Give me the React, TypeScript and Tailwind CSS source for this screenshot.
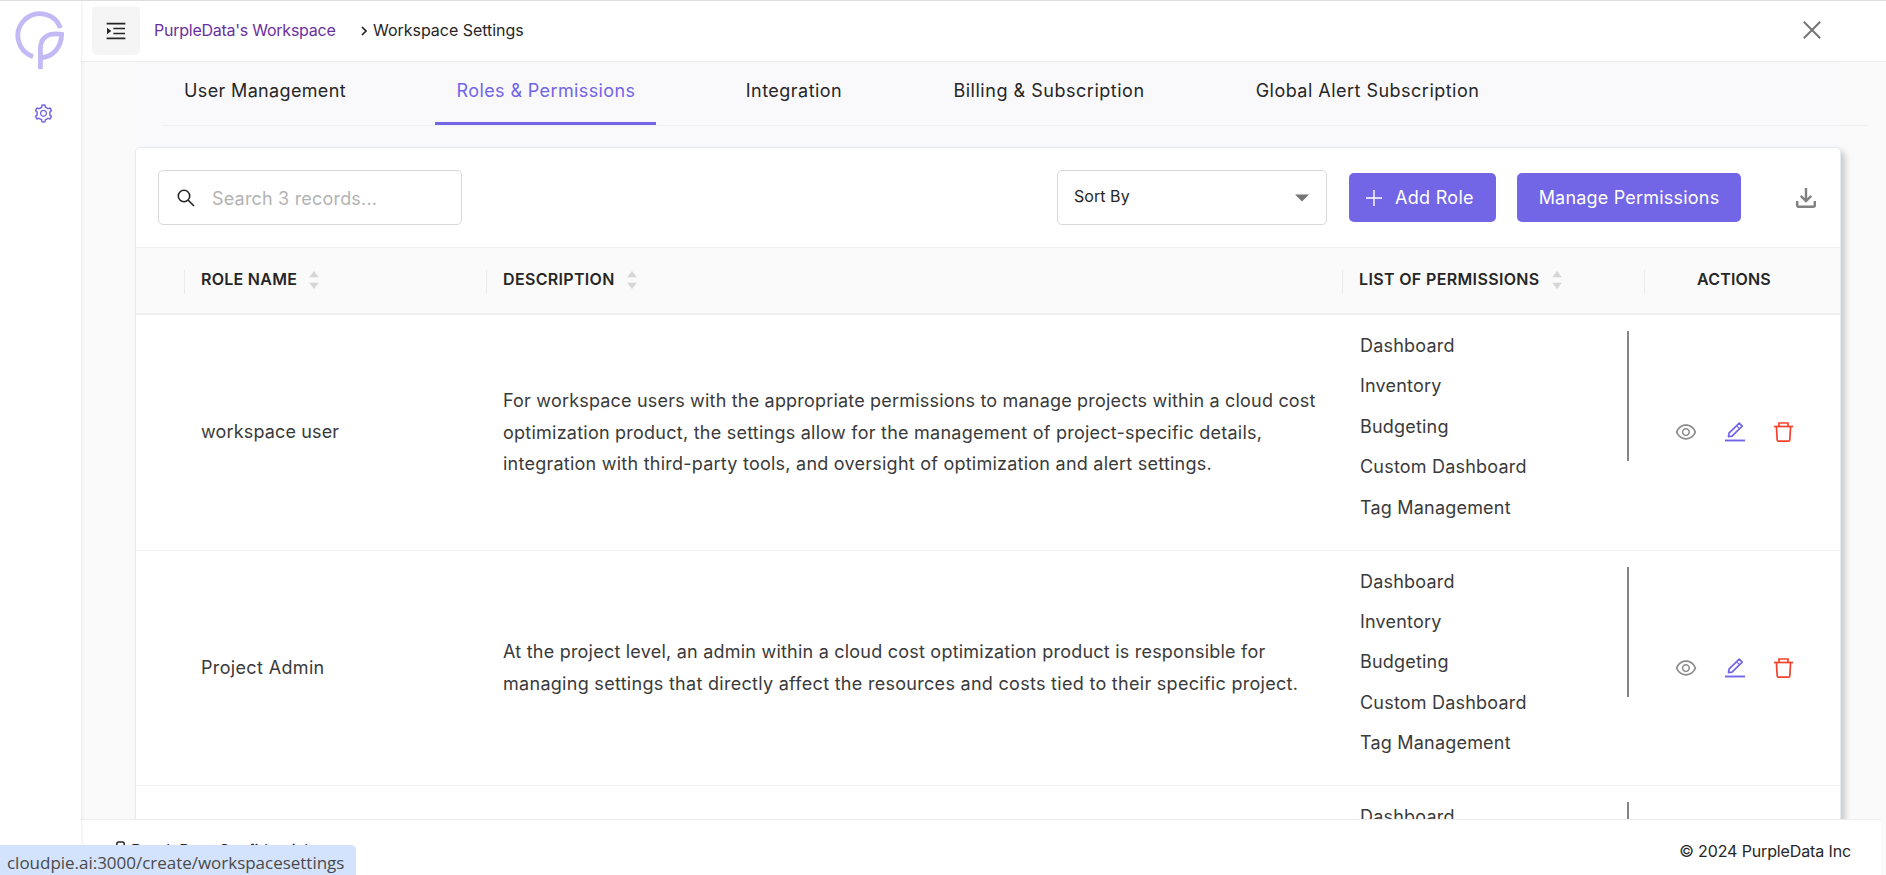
import React from "react";
import { AiOutlineMenuUnfold, AiOutlineSetting, AiOutlineEye } from "react-icons/ai";

const tabs = [
  { label: "User Management", cls: "w-[206px] tracking-[0.34px]" },
  { label: "Roles & Permissions", cls: "w-[221px] pl-px tracking-[0.38px]" },
  { label: "Integration", cls: "w-[141px] pl-px tracking-[0.47px]" },
  { label: "Billing & Subscription", cls: "w-[235px] pl-px tracking-[0.52px]" },
  { label: "Global Alert Subscription", cls: "w-[267px] pl-[2px] tracking-[0.48px]" },
];

const permissions = ["Dashboard", "Inventory", "Budgeting", "Custom Dashboard", "Tag Management"];

const roles = [
  {
    name: "workspace user",
    nameCls: "tracking-[0.15px]",
    lines: [
      { text: "For workspace users with the appropriate permissions to manage projects within a cloud cost", cls: "tracking-[0.19px]" },
      { text: "optimization product, the settings allow for the management of project-specific details,", cls: "tracking-[0.24px]" },
      { text: "integration with third-party tools, and oversight of optimization and alert settings.", cls: "tracking-[0.24px]" },
    ],
  },
  {
    name: "Project Admin",
    nameCls: "tracking-[0.35px]",
    lines: [
      { text: "At the project level, an admin within a cloud cost optimization product is responsible for", cls: "tracking-[0.22px]" },
      { text: "managing settings that directly affect the resources and costs tied to their specific project.", cls: "tracking-[0.29px]" },
    ],
  },
  { name: "", nameCls: "", lines: [] },
];

function Logo() {
  return (
    <svg width="50" height="58" viewBox="0 0 50 58" fill="none" stroke="#c2b9f5" strokeWidth="4.8">
      <path d="M45.5 17A22 22 0 1 0 18 45.6" />
      <path d="M25.4 58V38C25.4 27 32 21.5 46.6 23.3C46.5 36 38 46.5 25.4 46.8" />
    </svg>
  );
}

function Sorter() {
  return (
    <svg width="10" height="18" viewBox="0 0 10 18" fill="#d6d6d6" className="mb-px">
      <path d="M5 0L9.8 6.2H0.2Z" />
      <path d="M5 18L9.8 11.8H0.2Z" />
    </svg>
  );
}

function SearchIcon() {
  return (
    <svg width="18" height="18" viewBox="0 0 18 18" fill="none" stroke="#262626" strokeWidth="1.6">
      <circle cx="7" cy="7" r="5.7" />
      <path d="M11 11L17 17" />
    </svg>
  );
}

function PlusIcon() {
  return (
    <svg width="16" height="16" viewBox="0 0 16 16" stroke="#ffffff" strokeWidth="1.4">
      <path d="M8 0V16M0 8H16" />
    </svg>
  );
}

function CloseIcon() {
  return (
    <svg width="18" height="18" viewBox="0 0 18 18" stroke="#757575" strokeWidth="2">
      <path d="M0.8 0.8L17.2 17.2M17.2 0.8L0.8 17.2" />
    </svg>
  );
}

function EditIcon() {
  return (
    <svg width="20" height="20" viewBox="0 0 20 20" fill="none" stroke="#7265e6" strokeWidth="1.7">
      <path d="M14.2 1.2L17.2 4.2L7 14.2L3.5 14.6L4 11.2Z" strokeLinejoin="round" />
      <path d="M11.6 3.8L14.5 6.7" strokeWidth="1.2" />
      <path d="M0 18.5H20" strokeWidth="1.9" />
    </svg>
  );
}

function TrashIcon() {
  return (
    <svg width="19" height="20" viewBox="0 0 19 20" fill="none" stroke="#f5412d" strokeWidth="1.7">
      <path d="M0 4.5H19" />
      <path d="M5 4.5V1H14V4.5" />
      <path d="M2.4 4.5L3.2 18Q3.3 19.1 4.3 19.1H14.7Q15.7 19.1 15.8 18L16.6 4.5" />
    </svg>
  );
}

function DownloadIcon() {
  return (
    <svg width="20" height="20" viewBox="0 0 20 20" fill="none" stroke="#808080" strokeWidth="2.4">
      <path d="M10 0V13M4.8 7.8L10 13L15.2 7.8" />
      <path d="M1.2 13V17.3Q1.2 18.8 2.7 18.8H17.3Q18.8 18.8 18.8 17.3V13" />
    </svg>
  );
}

function HeadCell({ label, className }: { label: string; className: string }) {
  return (
    <div className={`${className} flex shrink-0 items-center gap-3 pl-4`}>
      <span className="mb-[3px]">{label}</span>
      <Sorter />
    </div>
  );
}

function Divider() {
  return <div className="mt-[2px] h-6 w-px shrink-0 bg-[#ebebeb]" />;
}

export default function App() {
  return (
    <div className="relative flex h-[875px] w-[1886px] overflow-hidden border-t border-[#dedede] bg-[#fafafa] font-['Inter',sans-serif] text-[#262626]">
      <aside className="z-10 flex w-[81px] shrink-0 flex-col bg-white shadow-[0_0_4px_rgba(0,0,0,0.1)]">
        <div className="pl-[15px] pt-[10px]">
          <Logo />
        </div>
        <AiOutlineSetting className="ml-[33px] mt-[34px] size-[21px] text-[#7265e6]" />
      </aside>

      <div className="flex min-w-0 flex-1 flex-col">
        <header className="flex h-[61px] shrink-0 items-center border-b border-[#ededed] bg-white pb-[2px] pl-[11px] text-[16px]">
          <button className="flex h-[49px] w-12 items-center justify-center rounded-[5px] bg-[#f5f5f5]">
            <AiOutlineMenuUnfold className="mr-px mt-px size-6" />
          </button>
          <a className="ml-[14px] w-[181px] whitespace-nowrap pb-px tracking-[-0.25px] text-[#6b2fa0]">PurpleData's Workspace</a>
          <svg className="ml-[26px] mt-px" width="6" height="10" viewBox="0 0 6 10" fill="none" stroke="#262626" strokeWidth="1.7">
            <path d="M1 1L5 5L1 9" />
          </svg>
          <span className="ml-[6px] flex-1 whitespace-nowrap pb-px tracking-[-0.03px]">Workspace Settings</span>
          <div className="mr-[65px]">
            <CloseIcon />
          </div>
        </header>

        <div className="flex min-h-0 flex-1 flex-col overflow-hidden">
          <div className="ml-[54px] flex h-[85px] w-[1706px] shrink-0 bg-[#f9f9fc] pl-[27px]">
            <nav className="flex h-16 w-[1706px] shrink-0 gap-[67px] border-b border-[#f0f0f0] text-[18px]">
              {tabs.map((t, i) => (
                <div
                  key={t.label}
                  className={`flex h-[63px] shrink-0 justify-center whitespace-nowrap pt-[15px] ${t.cls} ${
                    i === 1 ? "border-b-[3px] border-[#7265e6] text-[#7265e6]" : ""
                  }`}
                >
                  {t.label}
                </div>
              ))}
            </nav>
          </div>

          <main className="ml-[54px] w-[1706px] shrink-0 rounded-[5px] border border-[#e6ebf1] bg-white shadow-[4px_4px_6px_rgba(0,0,0,0.2)]">
            <div className="flex h-[99px] items-center px-[22px]">
              <div className="flex h-[55px] w-[304px] items-center rounded-[5px] border border-[#d9d9d9] pl-[18px]">
                <SearchIcon />
                <span className="ml-[17px] mt-px text-[18px] tracking-[0.19px] text-[#b3b3b3]">Search 3 records...</span>
              </div>
              <div className="ml-auto flex h-[55px] w-[270px] items-center justify-between rounded-[5px] border border-[#d9d9d9] pl-4 pr-[17px] text-[16px]">
                <span className="mb-[3px] tracking-[0.05px]">Sort By</span>
                <svg width="14" height="8" viewBox="0 0 14 8" fill="#757575">
                  <path d="M0 0.5H14L7 7.5Z" />
                </svg>
              </div>
              <button className="ml-[22px] flex h-[49px] w-[147px] items-center rounded-[5px] bg-[#7265e6] pl-[17px] text-[18px] text-white">
                <PlusIcon />
                <span className="ml-[13px] whitespace-nowrap tracking-[0.3px]">Add Role</span>
              </button>
              <button className="ml-[21px] h-[49px] w-[224px] whitespace-nowrap rounded-[5px] bg-[#7265e6] text-[18px] tracking-[0.2px] text-white">
                Manage Permissions
              </button>
              <div className="ml-[55px] mr-[2px]">
                <DownloadIcon />
              </div>
            </div>

            <div className="flex h-[68px] items-center border-b-2 border-t border-[#f0f0f0] bg-[#fafafa] pl-[48px] text-[16px] font-semibold">
              <Divider />
              <HeadCell label="ROLE NAME" className="w-[301px] tracking-[0.27px]" />
              <Divider />
              <HeadCell label="DESCRIPTION" className="w-[855px] tracking-[0.33px]" />
              <Divider />
              <HeadCell label="LIST OF PERMISSIONS" className="w-[301px] tracking-[0.35px]" />
              <Divider />
              <div className="mb-[3px] flex-1 pr-[17px] text-center tracking-[0.17px]">ACTIONS</div>
            </div>

            {roles.map((r, i) => (
              <div key={i} className="flex h-[235.6px] items-center border-b border-[#f0f0f0] pl-[65px] text-[18px] tracking-[0.2px] text-[#3a3a3a]">
                <div className={`mb-px w-[302px] shrink-0 ${r.nameCls}`}>{r.name}</div>
                <div className="w-[857px] shrink-0 leading-[31.4px]">
                  {r.lines.map((l) => (
                    <div key={l.text} className={`whitespace-nowrap ${l.cls}`}>
                      {l.text}
                    </div>
                  ))}
                </div>
                <div className="flex h-full w-[269px] shrink-0 justify-between pt-4">
                  <ul className="pt-px leading-[28.4px]">
                    {permissions.map((p) => (
                      <li key={p} className="mb-3">{p}</li>
                    ))}
                  </ul>
                  <div className="h-[130px] w-[2px] bg-[#858585]" />
                </div>
                <div className="flex items-center pl-[45px]">
                  <AiOutlineEye className="size-6 text-[#8c8c8c]" />
                  <div className="ml-[27px]">
                    <EditIcon />
                  </div>
                  <div className="ml-[29px]">
                    <TrashIcon />
                  </div>
                </div>
              </div>
            ))}
          </main>
        </div>

        <footer className="mr-[5px] flex h-[56px] shrink-0 items-center justify-between border-t border-[#ededed] bg-white pl-[34px] pr-[30px] pt-[6px] text-[16px]">
          <span className="mb-px flex items-center gap-[5px] tracking-[-0.1px]">
            <svg className="mb-[2px]" width="11" height="16" viewBox="0 0 11 16" fill="none" stroke="#262626" strokeWidth="1.5">
              <path d="M1.8 7V3Q1.8 1 3.8 1H7.2Q9.2 1 9.2 3V7M1 7H10V15H1Z" />
            </svg>
            PurpleData Confidential
          </span>
          <span className="tracking-[-0.13px]">© 2024 PurpleData Inc</span>
        </footer>
      </div>

      <div className="absolute bottom-0 left-0 z-20 h-[30px] w-[356px] whitespace-nowrap rounded-tr-[5px] bg-[#d3e3fd] pl-[7px] pt-[5px] font-['Open_Sans',sans-serif] text-[17px] leading-[26px] tracking-[-0.02px] text-[#4a4a4a]">
        cloudpie.ai:3000/create/workspacesettings
      </div>
    </div>
  );
}
